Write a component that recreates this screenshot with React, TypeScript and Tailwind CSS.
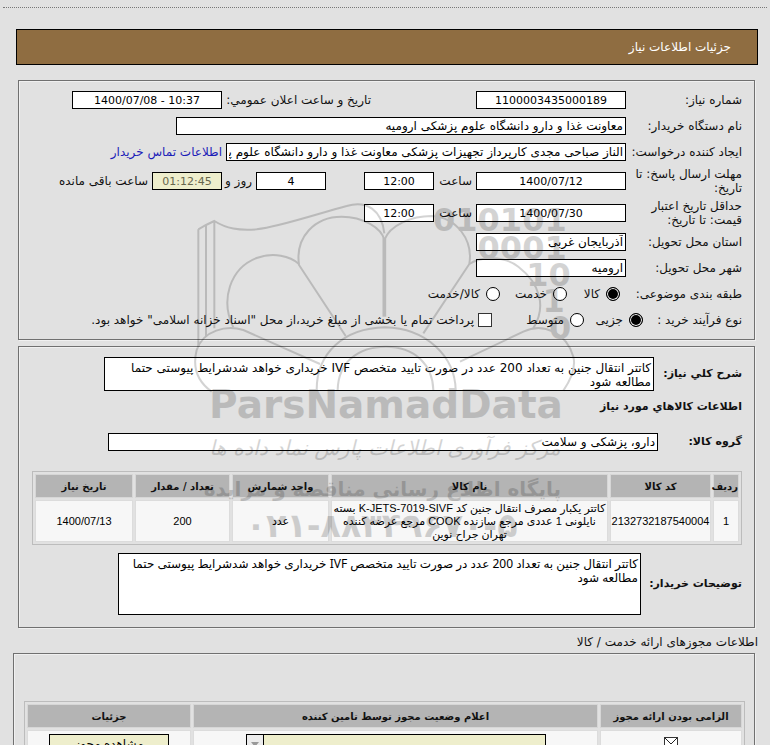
import type { InputHTMLAttributes, ReactNode } from 'react';
import clsx from 'clsx';

const PANEL = 'border border-[#707070] shadow-[inset_1px_1px_0_#f0f0f0,1px_1px_0_#f0f0f0]';
const FIELD = 'h-[18px] shrink-0 border border-black px-[2px] leading-4 outline-none';
const TEXT_AREA =
  'block resize-none overflow-hidden border border-black bg-white px-[2px] py-[3px] text-[12px] leading-[14px] text-black outline-none';
const TABLE = 'w-full table-fixed border-separate border-spacing-[2px] border border-[#bcbcbc] text-center';
const HEAD_CELL = 'h-6 border border-[#d6d6d6] bg-[#b4b4b4] text-[10px] font-bold';
const BODY_CELL =
  "border border-[#dcdcdc] bg-[#f7f7f7] font-['Liberation_Sans','DejaVu_Sans',sans-serif] text-[11px] leading-[13px] text-black";

const DESCRIPTION =
  'کاتتر انتقال جنین به تعداد 200 عدد در صورت تایید متخصص IVF خریداری خواهد شدشرایط پیوستی حتما مطالعه شود';

interface FieldProps extends InputHTMLAttributes<HTMLInputElement> {
  numeric?: boolean;
  muted?: boolean;
}

function Field({ numeric, muted, className, ...props }: FieldProps) {
  return (
    <input
      type="text"
      readOnly
      className={clsx(
        FIELD,
        numeric ? 'text-center text-[11px]' : 'text-[12px]',
        muted ? 'bg-[#eeeecc] text-[#66664c]' : 'bg-white text-black',
        className,
      )}
      {...props}
    />
  );
}

interface RowProps {
  label: string;
  htmlFor?: string;
  tall?: boolean;
  children: ReactNode;
}

function Row({ label, htmlFor, tall, children }: RowProps) {
  return (
    <div className={clsx('flex items-center gap-1', tall ? 'h-8' : 'h-[26px]')}>
      <label htmlFor={htmlFor} className="w-28 shrink-0 leading-[14px]">
        {label}
      </label>
      {children}
    </div>
  );
}

interface ChoiceProps {
  name: string;
  label: string;
  checked?: boolean;
  className?: string;
}

function Choice({ name, label, checked, className }: ChoiceProps) {
  return (
    <label className={clsx('flex shrink-0 items-center gap-[6px]', className)}>
      <input
        type="radio"
        name={name}
        defaultChecked={checked}
        className="h-[14px] w-[14px] shrink-0 appearance-none rounded-full border border-black bg-white checked:bg-black checked:shadow-[inset_0_0_0_1px_white]"
      />
      {label}
    </label>
  );
}

// Site stamp that floats over the form
function Watermark() {
  return (
    <svg
      viewBox="0 0 1170 1080"
      className="pointer-events-none absolute left-[190px] top-[190px] h-[360px] w-[390px] overflow-visible opacity-[0.17]"
      aria-hidden="true"
    >
      <g fill="none" stroke="#000" strokeWidth="6">
        <path d="M25 118V470M48 105V440M73 93V415M25 118L48 105L73 93C110 116 145 122 200 118C270 110 380 72 470 48C530 30 575 60 583 130" />
        <path d="M583 145V380" strokeWidth="11" />
        <path d="M467 438L327 225C315 140 375 80 455 80C520 80 575 115 583 150C600 105 665 78 725 78C800 82 850 150 838 222L700 430" />
        <path d="M327 222C300 198 250 186 200 204C120 235 90 330 130 412M838 222C870 200 940 195 985 230C1050 280 1070 350 1030 415" />
        <path d="M390 522L160 420C110 405 40 420 20 480C5 540 30 580 65 605" />
        <path d="M810 515L1000 425C1060 395 1130 430 1150 500C1160 540 1135 580 1120 602" />
        <path d="M380 600C380 490 460 415 585 412C710 415 795 500 797 600M443 600C445 520 500 470 588 470C675 470 728 525 730 600" />
      </g>
      <g className="font-['DejaVu_Sans'] font-bold" direction="ltr">
        <g fontSize="96" textAnchor="end">
          <text x="1130" y="122">010101</text>
          <text x="1130" y="206">0001</text>
          <text x="1142" y="288">10</text>
          <text x="1124" y="366">1</text>
          <text x="1144" y="446">0</text>
        </g>
        <text x="588" y="684" fontSize="117" textAnchor="middle">ParsNamadData</text>
        <text x="585" y="794" fontSize="62" textAnchor="middle" direction="rtl" fontStyle="italic" fontWeight="400">
          مرکز فرآوری اطلاعات پارس نماد داده ها
        </text>
        <text x="577" y="918" fontSize="60" textAnchor="middle" direction="rtl">
          پایگاه اطلاع رسانی مناقصه و مزایده
        </text>
        <text x="575" y="1042" fontSize="100" textAnchor="middle">۰۲۱-۸۸۳۴۹۶۷۰-۵</text>
      </g>
    </svg>
  );
}

function NeedInfo() {
  return (
    <section className={clsx('ml-[18px] mr-[15px] mt-[15px] pb-[6px] pl-[13px] pr-3 pt-[6px]', PANEL)}>
      <Row label="شماره نیاز:" htmlFor="need-no">
        <Field id="need-no" numeric className="w-[150px]" defaultValue="1100003435000189" />
        <label htmlFor="announced" className="ms-[101px] w-[145px] shrink-0 whitespace-nowrap">
          تاریخ و ساعت اعلان عمومي:
        </label>
        <Field id="announced" numeric dir="ltr" className="w-[150px]" defaultValue="1400/07/08 - 10:37" />
      </Row>
      <Row label="نام دستگاه خریدار:" htmlFor="buyer">
        <Field id="buyer" className="w-[450px]" defaultValue="معاونت غذا و دارو دانشگاه علوم پزشکی ارومیه" />
      </Row>
      <Row label="ایجاد کننده درخواست:" htmlFor="creator">
        <Field
          id="creator"
          className="w-[400px]"
          defaultValue="الناز صباحی مجدی کارپرداز تجهیزات پزشکی معاونت غذا و دارو دانشگاه علوم پزشکی ارومیه"
        />
        <a href="#contact" className="whitespace-nowrap text-[#1c1cb8]">اطلاعات تماس خریدار</a>
      </Row>
      <Row label="مهلت ارسال پاسخ: تا تاریخ:" htmlFor="reply-date" tall>
        <Field id="reply-date" numeric className="w-[150px]" defaultValue="1400/07/12" />
        <label htmlFor="reply-time" className="w-[34px] shrink-0">ساعت</label>
        <Field id="reply-time" numeric className="w-[70px]" defaultValue="12:00" />
        <Field id="days" numeric className="ms-[34px] w-[70px]" defaultValue="4" />
        <label htmlFor="days" className="w-[26px] shrink-0 whitespace-nowrap">روز و</label>
        <Field id="left" numeric muted className="w-[70px]" defaultValue="01:12:45" />
        <label htmlFor="left" className="whitespace-nowrap">ساعت باقی مانده</label>
      </Row>
      <Row label="حداقل تاریخ اعتبار قیمت: تا تاریخ:" htmlFor="valid-date" tall>
        <Field id="valid-date" numeric className="w-[150px]" defaultValue="1400/07/30" />
        <label htmlFor="valid-time" className="w-[34px] shrink-0">ساعت</label>
        <Field id="valid-time" numeric className="w-[70px]" defaultValue="12:00" />
      </Row>
      <Row label="استان محل تحویل:" htmlFor="province">
        <Field id="province" className="w-[150px]" defaultValue="آذربایجان غربی" />
      </Row>
      <Row label="شهر محل تحویل:" htmlFor="city">
        <Field id="city" className="w-[150px]" defaultValue="ارومیه" />
      </Row>
      <div className="flex h-[26px] items-center">
        <span className="w-[122px] shrink-0">طبقه بندی موضوعی:</span>
        <Choice name="subject" label="کالا" checked className="w-[53px]" />
        <Choice name="subject" label="خدمت" className="w-[67px]" />
        <Choice name="subject" label="کالا/خدمت" />
      </div>
      <div className="flex h-[26px] items-center">
        <span className="w-[99px] shrink-0">نوع فرآیند خرید :</span>
        <Choice name="process" label="جزیی" checked className="w-[59px]" />
        <Choice name="process" label="متوسط" className="w-[92px]" />
        <label className="flex items-center gap-1 whitespace-nowrap">
          <input type="checkbox" className="h-[14px] w-[14px] appearance-none border border-[#333] bg-white" />
          پرداخت تمام یا بخشی از مبلغ خرید،از محل "اسناد خزانه اسلامی" خواهد بود.
        </label>
      </div>
    </section>
  );
}

function Goods() {
  return (
    <section className={clsx('ml-[18px] mr-[15px] mt-[6px] pb-3 pl-[13px] pr-3 pt-[10px]', PANEL)}>
      <div className="flex items-center">
        <label htmlFor="summary" className="w-[88px] shrink-0 text-[11px] font-bold">شرح کلي نياز:</label>
        <textarea id="summary" readOnly className={clsx('h-[34px] w-[550px]', TEXT_AREA)} defaultValue={DESCRIPTION} />
      </div>
      <h2 className="mt-2 h-4 text-[11px] font-bold leading-4">اطلاعات کالاهاي مورد نياز</h2>
      <div className="mt-[18px] flex items-center">
        <label htmlFor="group" className="w-[84px] shrink-0 text-[11px] font-bold">گروه کالا:</label>
        <Field id="group" className="w-[550px]" defaultValue="دارو، پزشکی و سلامت" />
      </div>
      <table className={clsx('mt-5', TABLE)}>
        <colgroup>
          <col className="w-[26px]" />
          <col className="w-[101px]" />
          <col />
          <col className="w-[97px]" />
          <col className="w-[95px]" />
          <col className="w-[98px]" />
        </colgroup>
        <thead>
          <tr>
            <th className={HEAD_CELL}>ردیف</th>
            <th className={HEAD_CELL}>کد کالا</th>
            <th className={HEAD_CELL}>نام کالا</th>
            <th className={HEAD_CELL}>واحد شمارش</th>
            <th className={HEAD_CELL}>تعداد / مقدار</th>
            <th className={HEAD_CELL}>تاریخ نیاز</th>
          </tr>
        </thead>
        <tbody>
          <tr className="h-[42px]">
            <td className={BODY_CELL}>1</td>
            <td className={BODY_CELL}>2132732187540004</td>
            <td className={BODY_CELL}>
              کاتتر یکبار مصرف انتقال جنین کد K-JETS-7019-SIVF بسته
              <br />
              نایلونی 1 عددی مرجع سازنده COOK مرجع عرضه کننده
              <br />
              تهران جراح نوین
            </td>
            <td className={BODY_CELL}>عدد</td>
            <td className={BODY_CELL}>200</td>
            <td className={BODY_CELL}>1400/07/13</td>
          </tr>
        </tbody>
      </table>
      <div className="mt-2 flex items-center">
        <label htmlFor="notes" className="w-[101px] shrink-0 text-[11px] font-bold">توضیحات خریدار:</label>
        <textarea
          id="notes"
          readOnly
          className={clsx("h-[62px] w-[523px] font-['Noto_Sans','DejaVu_Sans',sans-serif]", TEXT_AREA)}
          defaultValue={DESCRIPTION}
        />
      </div>
    </section>
  );
}

function Permits() {
  return (
    <>
      <h2 className="mr-3 mt-[6px] h-[19px] leading-4">اطلاعات مجوزهای ارائه خدمت / کالا</h2>
      <section className={clsx('ml-[13px] mr-[15px] pb-3 pl-[10px] pr-[9px] pt-[47px]', PANEL)}>
        <table className={TABLE}>
          <colgroup>
            <col className="w-[142px]" />
            <col />
            <col className="w-[164px]" />
          </colgroup>
          <thead>
            <tr>
              <th className={HEAD_CELL}>الزامی بودن ارائه مجوز</th>
              <th className={HEAD_CELL}>اعلام وضعیت مجوز توسط تامین کننده</th>
              <th className={HEAD_CELL}>جزئیات</th>
            </tr>
          </thead>
          <tbody>
            <tr className="h-7">
              <td className={BODY_CELL}>
                <span className="relative inline-block h-[14px] w-[14px] align-middle">
                  <input
                    type="checkbox"
                    defaultChecked
                    aria-label="الزامی بودن ارائه مجوز"
                    className="block h-[14px] w-[14px] appearance-none border border-[#333] bg-white"
                  />
                  <svg viewBox="0 0 14 14" className="pointer-events-none absolute inset-0 h-[14px] w-[14px]">
                    <path d="M1 1L7 7L13 1M1 13L5 8M13 13L9 8" fill="none" stroke="#222" />
                  </svg>
                </span>
              </td>
              <td className={BODY_CELL}>
                <span className="relative inline-block align-middle">
                  <select
                    aria-label="وضعیت مجوز"
                    className="block h-5 w-[300px] appearance-none border border-black bg-[#eeeecc] text-[12px]"
                  >
                    <option></option>
                  </select>
                  <span className="pointer-events-none absolute bottom-px left-px top-px flex w-[17px] items-center justify-center border-r border-black bg-[#ececec]">
                    <svg viewBox="0 0 8 5" className="h-[5px] w-2">
                      <path d="M0 0H8L4 5Z" fill="#999" />
                    </svg>
                  </span>
                </span>
              </td>
              <td className={BODY_CELL}>
                <button type="button" className="h-5 w-[120px] border border-black bg-[#eeeecc] align-middle text-[12px] leading-4">
                  مشاهده مجوز
                </button>
              </td>
            </tr>
          </tbody>
        </table>
      </section>
    </>
  );
}

export default function App() {
  return (
    <main
      dir="rtl"
      className="relative h-screen overflow-hidden bg-[#e1e1e1] font-['DejaVu_Sans',sans-serif] text-[12px] text-[#111]"
    >
      <div className="mx-[3px] h-2 border-b border-dotted border-[#777]" />
      <header className="ml-4 mr-3 mt-[21px] flex h-9 items-center border border-black bg-[#8f6d41] px-[26px] text-white">
        <h1>جزئیات اطلاعات نیاز</h1>
      </header>
      <NeedInfo />
      <Goods />
      <Permits />
      <Watermark />
    </main>
  );
}
